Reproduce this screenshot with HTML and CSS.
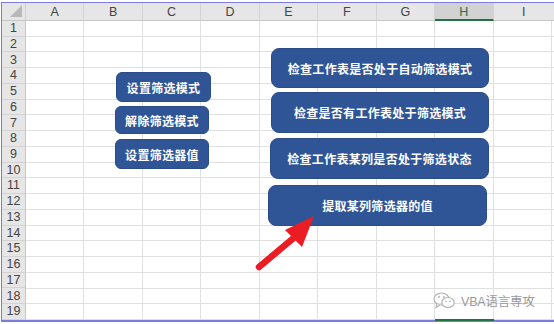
FILE: index.html
```html
<!DOCTYPE html>
<html lang="zh-CN">
<head>
<meta charset="utf-8">
<title>筛选模式</title>
<link rel="stylesheet" href="styles.css">
</head>
<body>
<div class="frame">
  <div class="sheet">
    <div class="corner"><span class="tri"></span></div>
    <div class="ch">A</div>
    <div class="ch">B</div>
    <div class="ch">C</div>
    <div class="ch">D</div>
    <div class="ch">E</div>
    <div class="ch">F</div>
    <div class="ch">G</div>
    <div class="ch sel">H</div>
    <div class="ch last">I</div>
    <div class="cells"></div>
    <div class="rh">1</div>
    <div class="rh">2</div>
    <div class="rh">3</div>
    <div class="rh">4</div>
    <div class="rh">5</div>
    <div class="rh">6</div>
    <div class="rh">7</div>
    <div class="rh">8</div>
    <div class="rh">9</div>
    <div class="rh">10</div>
    <div class="rh">11</div>
    <div class="rh">12</div>
    <div class="rh">13</div>
    <div class="rh">14</div>
    <div class="rh">15</div>
    <div class="rh">16</div>
    <div class="rh">17</div>
    <div class="rh">18</div>
    <div class="rh">19</div>
  </div>
</div>

<div class="overlay">
  <div class="btn b1">设置筛选模式</div>
  <div class="btn b2">解除筛选模式</div>
  <div class="btn b3">设置筛选器值</div>
  <div class="btn b4">检查工作表是否处于自动筛选模式</div>
  <div class="btn b5">检查是否有工作表处于筛选模式</div>
  <div class="btn b6">检查工作表某列是否处于筛选状态</div>
  <div class="btn b7">提取某列筛选器的值</div>
  <div class="selmark"></div>
  <svg class="arrow" width="554" height="324" viewBox="0 0 554 324">
    <line x1="259" y1="267" x2="296" y2="236" stroke="#ec1c24" stroke-width="6.5" stroke-linecap="round"/>
    <polygon points="314,216 285,230 302,247" fill="#ec1c24"/>
  </svg>
  <div class="wm">
    <svg class="wx" width="23" height="17" viewBox="0 0 23 17">
      <ellipse cx="8.5" cy="7" rx="7.5" ry="6" fill="none" stroke="#b3b3b3" stroke-width="1.2"/>
      <path d="M4 12 L3 15.5 L7 13" fill="#fff" stroke="#b3b3b3" stroke-width="1.1"/>
      <ellipse cx="15" cy="10.5" rx="6.2" ry="5" fill="#fff" stroke="#b3b3b3" stroke-width="1.2"/>
      <circle cx="6" cy="5" r="1" fill="#b3b3b3"/>
      <circle cx="11" cy="5" r="1" fill="#b3b3b3"/>
      <circle cx="13" cy="9.5" r="0.8" fill="#b3b3b3"/>
      <circle cx="17" cy="9.5" r="0.8" fill="#b3b3b3"/>
    </svg>
    <span class="wt">VBA语言専攻</span>
  </div>
</div>
</body>
</html>
```

FILE: styles.css
```css
html, body {
  margin: 0;
  padding: 0;
  background: #ffffff;
}

body {
  width: 554px;
  height: 324px;
  overflow: hidden;
  position: relative;
  font-family: "Liberation Sans", Arial, sans-serif;
}

.frame {
  margin: 2px 0 0 1px;
  border-top: 1px solid #7b7be0;
  border-left: 1px solid #7b7be0;
  border-bottom: 2px solid #7b7be0;
}

.sheet {
  display: grid;
  grid-template-columns: 24px repeat(8, 58.45px) 1fr;
  grid-template-rows: 18px repeat(19, 15.74px);
}

.corner {
  background: #e6e6e6;
  border-right: 1px solid #cfcfcf;
  border-bottom: 1px solid #c6c6c6;
  box-sizing: border-box;
  position: relative;
}

.tri {
  position: absolute;
  right: 3px;
  bottom: 3px;
  width: 0;
  height: 0;
  border-left: 12px solid transparent;
  border-bottom: 12px solid #b9b9b9;
}

.ch {
  background: #e6e6e6;
  border-right: 1px solid #d3d3d3;
  border-bottom: 1px solid #c6c6c6;
  box-sizing: border-box;
  color: #444444;
  font-size: 12.5px;
  display: flex;
  align-items: center;
  justify-content: center;
  padding-top: 1px;
}

.ch.sel {
  background: #d2d2d2;
  color: #217346;
  border-bottom: 2px solid #217346;
}

.ch.last {
  border-right: none;
}

.cells {
  grid-column: 2 / -1;
  grid-row: 2 / -1;
  background-image:
    repeating-linear-gradient(to right, transparent 0 57.45px, #e0e0e0 57.45px 58.45px),
    repeating-linear-gradient(to bottom, transparent 0 14.74px, #e0e0e0 14.74px 15.74px);
}

.rh {
  grid-column: 1;
  background: #e6e6e6;
  border-right: 1px solid #c6c6c6;
  border-bottom: 1px solid #d3d3d3;
  box-sizing: border-box;
  color: #444444;
  font-size: 12.5px;
  display: flex;
  align-items: center;
  justify-content: center;
  line-height: 1;
}

.overlay {
  position: absolute;
  inset: 0;
}

.btn {
  position: absolute;
  box-sizing: border-box;
  background: #2f5597;
  border: 1px solid #2a4d8a;
  border-radius: 6px;
  color: #ffffff;
  font-family: "Noto Sans CJK SC", "Noto Sans", sans-serif;
  font-weight: 700;
  font-size: 12px;
  letter-spacing: 0.3px;
  display: flex;
  align-items: center;
  justify-content: center;
  white-space: nowrap;
}

.b1 { left: 116px; top: 72px; width: 95px; height: 30px; }
.b2 { left: 115px; top: 106px; width: 94px; height: 28px; }
.b3 { left: 115px; top: 139px; width: 94px; height: 30px; }
.b4 { left: 271px; top: 48px; width: 218px; height: 40px; border-radius: 8px; }
.b5 { left: 271px; top: 92px; width: 218px; height: 41px; border-radius: 8px; }
.b6 { left: 270px; top: 138px; width: 219px; height: 41px; border-radius: 8px; }
.b7 { left: 268px; top: 185px; width: 219px; height: 41px; border-radius: 8px; }

.selmark {
  position: absolute;
  left: 435px;
  top: 319px;
  width: 59px;
  height: 2px;
  background: #217346;
}

.arrow {
  position: absolute;
  left: 0;
  top: 0;
}

.wm {
  position: absolute;
  left: 433px;
  top: 291px;
  display: flex;
  align-items: center;
  gap: 5px;
}

.wt {
  font-family: "Liberation Sans", "Noto Sans CJK SC", sans-serif;
  font-size: 12.5px;
  color: #9a9a9a;
  letter-spacing: -0.2px;
}
```
